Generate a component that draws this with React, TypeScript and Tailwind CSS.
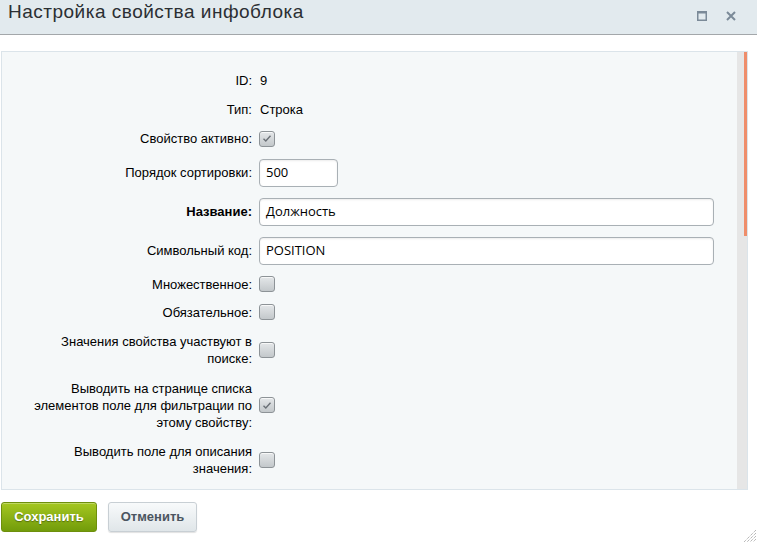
import React from 'react';

type Row = {
  label: string;
  h: string;
  bold?: boolean;
  kind: 'text' | 'check' | 'input';
  value?: string;
  checked?: boolean;
  wide?: boolean;
};

const rows: Row[] = [
  { label: 'ID:', h: 'h-[29px]', kind: 'text', value: '9' },
  { label: 'Тип:', h: 'h-[29px]', kind: 'text', value: 'Строка' },
  { label: 'Свойство активно:', h: 'h-[29px]', kind: 'check', checked: true },
  { label: 'Порядок сортировки:', h: 'h-[39px]', kind: 'input', value: '500' },
  { label: 'Название:', h: 'h-[39px]', kind: 'input', value: 'Должность', bold: true, wide: true },
  { label: 'Символьный код:', h: 'h-[39px]', kind: 'input', value: 'POSITION', wide: true },
  { label: 'Множественное:', h: 'h-[28px]', kind: 'check' },
  { label: 'Обязательное:', h: 'h-[28px]', kind: 'check' },
  { label: 'Значения свойства участвуют в поиске:', h: 'h-[48px]', kind: 'check' },
  {
    label: 'Выводить на странице списка элементов поле для фильтрации по этому свойству:',
    h: 'h-[62px]',
    kind: 'check',
    checked: true,
  },
  { label: 'Выводить поле для описания значения:', h: 'h-[47px]', kind: 'check' },
];

const Checkbox = ({ checked }: { checked?: boolean }) => (
  <span className="flex h-[16px] w-[16px] items-center justify-center rounded-[3px] border border-[#8d9397] bg-gradient-to-b from-[#e4e7e9] to-[#c3c8cb] shadow-[inset_0_1px_0_rgba(255,255,255,0.7)]">
    {checked && (
      <svg width="10" height="9" viewBox="0 0 10 9">
        <path d="M1.5 4.8 L3.8 7 L8.5 1.8" fill="none" stroke="#6a7076" strokeWidth="1.4" />
      </svg>
    )}
  </span>
);

const FormRow = ({ row }: { row: Row }) => (
  <div className={`flex items-center ${row.h}`}>
    <div
      className={`w-[256px] shrink-0 pl-[29px] pr-[6px] text-right leading-[17px] text-black ${
        row.bold ? 'font-bold' : ''
      }`}
    >
      {row.label}
    </div>
    <div className="flex items-center pl-[1px]">
      {row.kind === 'text' && <span className="pl-[1px] text-black">{row.value}</span>}
      {row.kind === 'check' && <Checkbox checked={row.checked} />}
      {row.kind === 'input' && (
        <div
          className={`flex h-[28px] items-center rounded-[4px] border border-[#a9b0b5] bg-white pl-[6px] font-['Open_Sans',sans-serif] text-[13px] text-black shadow-[inset_0_1px_2px_rgba(0,0,0,0.08)] ${
            row.wide ? 'w-[455px]' : 'w-[79px]'
          }`}
        >
          {row.value}
        </div>
      )}
    </div>
  </div>
);

export default function App() {
  return (
    <div className="relative h-[544px] w-[757px] overflow-hidden bg-white font-['Liberation_Sans',Arial,sans-serif] text-[13px]">
      <div className="flex h-[35px] justify-between border-b border-[#a3a7aa] bg-[#e2eaee] pl-[8px] pr-[21px]">
        <span className="mt-[2px] text-[19px] leading-[19px] tracking-[0.5px] text-[#2b2f33]">
          Настройка свойства инфоблока
        </span>
        <div className="flex items-center gap-[19px] pb-[3px]">
          <svg width="10" height="10" viewBox="0 0 10 10">
            <rect x="0.75" y="0.75" width="8.5" height="8.5" fill="none" stroke="#7b8a98" strokeWidth="1.5" />
            <rect x="0" y="0" width="10" height="2.5" fill="#7b8a98" />
          </svg>
          <svg width="10" height="10" viewBox="0 0 10 10">
            <path d="M1 1 L9 9 M9 1 L1 9" stroke="#7b8a98" strokeWidth="2" />
          </svg>
        </div>
      </div>

      <div className="ml-[1px] mt-[16px] flex h-[439px] w-[747px] border border-[#dbe4ea] bg-[#f5f8f9]">
        <div className="flex-1 pt-[14px]">
          {rows.map((r) => (
            <FormRow key={r.label} row={r} />
          ))}
        </div>
        <div className="flex w-[10px] justify-end bg-[#e6e6e6]">
          <div className="h-[184px] w-[3px] bg-[#ef8d6a]" />
        </div>
      </div>

      <div className="ml-[1px] mt-[12px] flex gap-[11px]">
        <button className="h-[30px] w-[96px] rounded-[3px] border border-[#6e8f0c] bg-gradient-to-b from-[#a5c720] to-[#729c0a] font-bold text-white [text-shadow:0_1px_1px_rgba(0,0,0,0.35)] shadow-[inset_0_1px_0_rgba(255,255,255,0.3)]">
          Сохранить
        </button>
        <button className="h-[30px] w-[89px] rounded-[3px] border border-[#c8cfd4] bg-gradient-to-b from-[#f8fafb] to-[#e0e6e9] font-bold text-[#4b5560] shadow-[0_1px_1px_rgba(0,0,0,0.12)]">
          Отменить
        </button>
      </div>

      <svg className="absolute bottom-[2px] right-[1px]" width="12" height="12" viewBox="0 0 12 12">
        <path
          d="M12 0 L0 12 M12 3 L3 12 M12 6 L6 12 M12 9 L9 12"
          stroke="#9a9a9a"
          strokeWidth="1"
          strokeDasharray="1 1"
        />
      </svg>
    </div>
  );
}
